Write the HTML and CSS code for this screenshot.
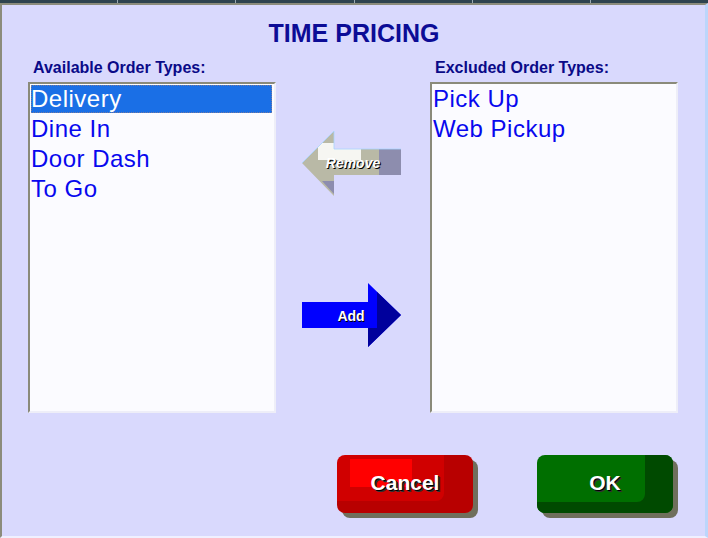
FILE: index.html
```html
<!DOCTYPE html>
<html>
<head>
<meta charset="utf-8">
<link rel="stylesheet" href="styles.css">
</head>
<body>
<div class="tabs"><span></span><span></span><span></span><span></span><span></span><span></span></div>
<div class="panel">
  <h1 class="title">TIME PRICING</h1>
  <div class="main">
    <div class="col">
      <div class="label">Available Order Types:</div>
      <ul class="list">
        <li class="sel">Delivery</li>
        <li>Dine In</li>
        <li>Door Dash</li>
        <li>To Go</li>
      </ul>
    </div>
    <div class="mid">
      <svg class="arrow remove" width="100" height="68" viewBox="0 0 100 68">
        <polygon points="1,33 33,1 33,19 100,19 100,45 33,45 33,66" fill="#b9b9a6"/>
        <polygon points="21,13 33,13 33,19 60,19 60,30 17,30 17,17" fill="#f6f6f2"/>
        <rect x="78" y="19" width="22" height="26" fill="#8d8dae"/>
        <polygon points="21,51 33,51 33,64" fill="#8d8dae"/>
        <polyline points="1,33 33,1 33,19 100,19" fill="none" stroke="#a8d4ff" stroke-width="0.8"/>
        <text x="53" y="39" class="atext it" text-anchor="middle" fill="#000">Remove</text>
        <text x="52" y="38" class="atext it" text-anchor="middle" fill="#fff">Remove</text>
      </svg>
      <svg class="arrow add" width="100" height="65" viewBox="0 0 100 65">
        <polygon points="1,19 67,19 67,0 100,32 67,64 67,45 1,45" fill="#0000ff"/>
        <polygon points="76,9 100,32 67,64 67,45 76,45" fill="#00009c"/>
        <text x="51" y="39" class="atext" text-anchor="middle" fill="#000">Add</text>
        <text x="50" y="38" class="atext" text-anchor="middle" fill="#fff">Add</text>
      </svg>
    </div>
    <div class="col">
      <div class="label">Excluded Order Types:</div>
      <ul class="list">
        <li>Pick Up</li>
        <li>Web Pickup</li>
      </ul>
    </div>
  </div>
  <div class="buttons">
    <button class="btn cancel">Cancel</button>
    <button class="btn ok">OK</button>
  </div>
</div>
</body>
</html>
```
FILE: styles.css
```css
html, body {
  margin: 0;
  padding: 0;
}
body {
  width: 708px;
  height: 538px;
  overflow: hidden;
  background: #d9d9fd;
  font-family: "Liberation Sans", Arial, sans-serif;
}
.tabs {
  display: flex;
  height: 3px;
  background: #2e434e;
}
.tabs span {
  flex: 1;
  border-right: 1px solid #9aa8b0;
}
.tabs span:last-child {
  border-right: none;
}
.panel {
  box-sizing: border-box;
  height: 535px;
  background: #d9d9fd;
  border-top: 2px solid #8c8c7c;
  border-left: 2px solid #8c8c7c;
  border-right: 3px solid #bcd6fb;
  border-bottom: 2px solid #f0f0ff;
  padding: 14px 0 0 26px;
  display: flex;
  flex-direction: column;
}
.title {
  margin: 0;
  width: 652px;
  text-align: center;
  font-size: 25px;
  line-height: 28px;
  font-weight: bold;
  color: #0c0c96;
}
.main {
  display: flex;
  margin-top: 12px;
}
.col {
  width: 248px;
  display: flex;
  flex-direction: column;
}
.label {
  font-size: 16px;
  line-height: 18px;
  font-weight: bold;
  color: #0a0a88;
  padding-left: 5px;
  margin-bottom: 5px;
  white-space: nowrap;
}
.list {
  box-sizing: border-box;
  list-style: none;
  margin: 0;
  padding: 0 1px;
  height: 331px;
  background: #fbfbff;
  border-top: 2px solid #8a8a7a;
  border-left: 2px solid #8a8a7a;
  border-right: 2px solid #eeeef8;
  border-bottom: 2px solid #eeeef8;
}
.list li {
  font-size: 24px;
  line-height: 30px;
  letter-spacing: 0.5px;
  color: #0808ee;
  padding-left: 0;
  white-space: nowrap;
}
.list li.sel {
  background: #1a6fe6;
  color: #ffffff;
  outline: 1px dotted #7a7a9a;
  outline-offset: -1px;
  line-height: 28px;
  margin: 1px 1px 1px 0;
}
.mid {
  width: 154px;
  display: flex;
  flex-direction: column;
  align-items: center;
  padding-top: 71px;
}
.arrow {
  display: block;
  margin-left: -4px;
}
.arrow.add {
  margin-top: 85px;
}
.atext {
  font-family: "Liberation Sans", Arial, sans-serif;
  font-weight: bold;
  font-size: 14px;
}
.atext.it {
  font-style: italic;
}
.buttons {
  display: flex;
  gap: 64px;
  margin-top: 42px;
  margin-left: 309px;
}
.btn {
  width: 136px;
  height: 58px;
  border: none;
  border-radius: 8px;
  padding: 0 0 2px 0;
  font-family: "Liberation Sans", Arial, sans-serif;
  font-weight: bold;
  font-size: 21px;
  color: #ffffff;
  text-shadow: 1px 1px 0 #000, 2px 2px 0 #333;
  cursor: pointer;
}
.cancel {
  background: linear-gradient(#ff0000, #ff0000) 13px 4px / 62px 28px no-repeat, #d00000;
  box-shadow: 5px 5px 0 #6f6f5c, inset -29px -12px 0 #b80000;
}
.ok {
  background: #006f00;
  box-shadow: 5px 5px 0 #6f6f5c, inset -28px -11px 0 #004a00;
}
```
